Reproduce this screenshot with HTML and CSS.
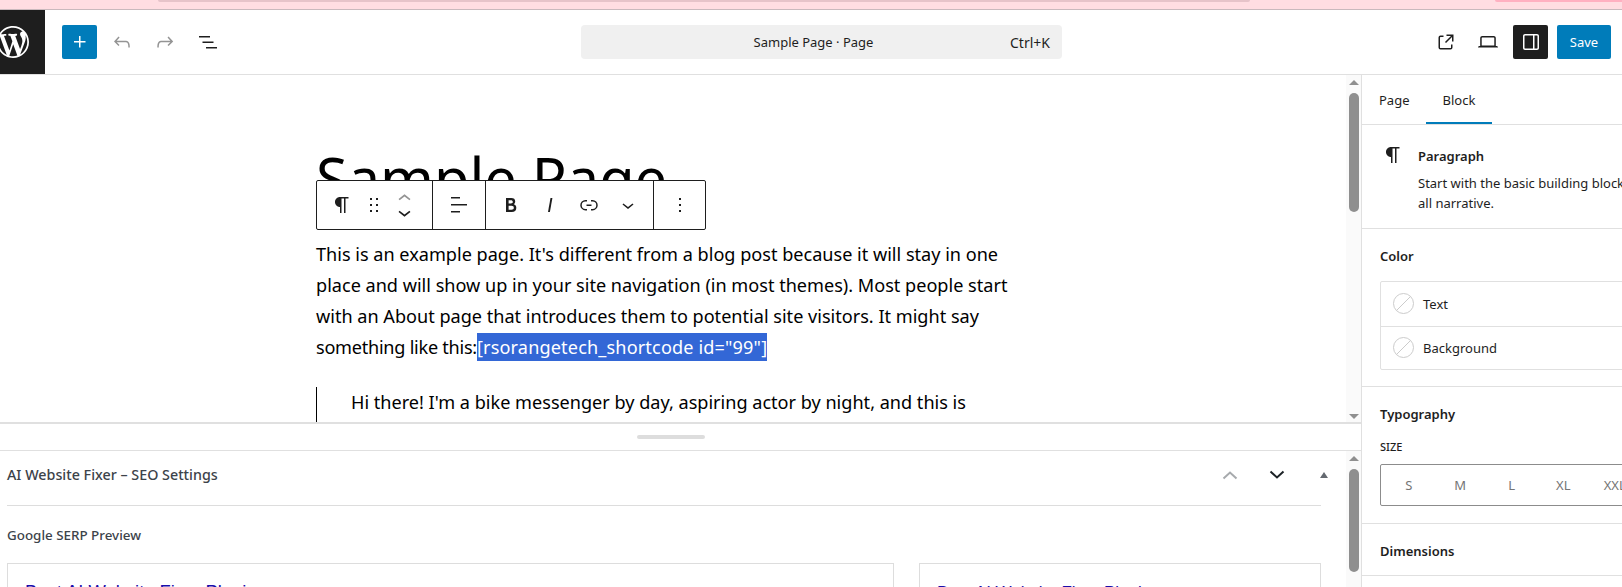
FILE: index.html
```html
<!DOCTYPE html>
<html lang="en">
<head>
  <meta charset="UTF-8">
  <title>Edit Page</title>
  <link rel="stylesheet" href="styles.css">
</head>
<body>
<div class="top-strip"><div class="top-strip-bar"></div><div class="top-strip-right"></div></div>

<header class="topbar">
  <div class="logo-box">
    <svg class="logo" viewBox="0 0 20 20"><path fill="#fff" d="M20 10c0-5.51-4.49-10-10-10C4.48 0 0 4.49 0 10c0 5.52 4.48 10 10 10 5.51 0 10-4.48 10-10zM7.78 15.37L4.37 6.22c.55-.02 1.17-.08 1.17-.08.5-.06.44-1.13-.06-1.11 0 0-1.45.11-2.37.11-.18 0-.37 0-.58-.01C4.12 2.69 6.87 1.11 10 1.11c2.33 0 4.45.87 6.05 2.34-.68-.11-1.65.39-1.65 1.58 0 .74.45 1.36.9 2.1.35.61.55 1.36.55 2.46 0 1.49-1.4 5-1.4 5l-3.03-8.37c.54-.02.82-.17.82-.17.5-.05.44-1.25-.06-1.22 0 0-1.44.12-2.38.12-.87 0-2.33-.12-2.33-.12-.5-.03-.56 1.2-.06 1.22l.92.08 1.26 3.41zM17.41 10c.24-.64.74-1.87.43-4.25.7 1.29 1.05 2.71 1.05 4.25 0 3.29-1.73 6.24-4.4 7.78.97-2.59 1.94-5.2 2.92-7.78zM6.1 18.09C3.12 16.65 1.11 13.53 1.11 10c0-1.3.23-2.48.72-3.59C3.25 10.3 4.67 14.2 6.1 18.09zm4.03-6.63l2.58 6.98c-.86.29-1.76.45-2.71.45-.79 0-1.57-.11-2.29-.33.81-2.38 1.62-4.74 2.42-7.1z"/></svg>
  </div>
  <div class="tools-left">
    <button class="icon-btn primary"><svg viewBox="0 0 24 24" width="24" height="24"><path fill="#fff" d="M11 12.5V17.5H12.5V12.5H17.5V11H12.5V6H11V11H6V12.5H11Z"/></svg></button>
    <button class="icon-btn muted"><svg viewBox="0 0 24 24" width="24" height="24"><path d="M18.3 11.7c-.6-.6-1.4-.9-2.3-.9H6.7l2.9-3.3-1.1-1-4.5 5L8.500 16l1-1-2.700-2.700H16c.5 0 .9.2 1.300.5 1 1 1 3.400 1 4.500v.3h1.500v-.2c0-1.500 0-4.300-1.500-5.700z"/></svg></button>
    <button class="icon-btn muted"><svg viewBox="0 0 24 24" width="24" height="24"><path d="M15.6 6.5l-1.1 1 2.900 3.300H8c-.9 0-1.700.3-2.300.9-1.400 1.500-1.400 4.200-1.400 5.600v.2h1.500v-.3c0-1.100 0-3.500 1-4.500.3-.3.7-.5 1.300-.5h9.200L14.500 15l1.100 1.100 4.600-4.600-4.600-5z"/></svg></button>
    <button class="icon-btn"><svg viewBox="0 0 24 24" width="24" height="24"><path d="M3 6h11v1.5H3V6Zm3.5 5.5h11V13h-11v-1.5ZM21 17H10v1.5h11V17Z"/></svg></button>
  </div>
  <div class="command-bar">
    <span class="command-title">Sample Page · Page</span>
    <span class="command-key">Ctrl+K</span>
  </div>
  <div class="tools-right">
    <button class="icon-btn btn-external"><svg viewBox="0 0 24 24" width="24" height="24"><path d="M19.5 4.500h-7V6h4.440l-5.970 5.970 1.060 1.060L18 7.060v4.440h1.500v-7Zm-13 1a2 2 0 0 0-2 2v10a2 2 0 0 0 2 2h10a2 2 0 0 0 2-2v-3H17v3a.5.5 0 0 1-.5.5h-10a.5.5 0 0 1-.5-.5v-10a.5.5 0 0 1 .5-.5h3V5.500h-3Z"/></svg></button>
    <button class="icon-btn btn-device"><svg viewBox="0 0 24 24" width="24" height="24"><path d="M20.5 16h-.7V8c0-1.100-.9-2-2-2H6.200c-1.100 0-2 .9-2 2v8h-.7c-.8 0-1.500.7-1.500 1.500h20c0-.8-.7-1.500-1.500-1.500zM5.700 8c0-.3.2-.5.5-.5h11.600c.3 0 .5.2.5.5v7.600H5.700V8z"/></svg></button>
    <button class="icon-btn dark"><svg viewBox="0 0 24 24" width="24" height="24"><path fill="#fff" d="M18 4H6c-1.100 0-2 .9-2 2v12c0 1.100.9 2 2 2h12c1.100 0 2-.9 2-2V6c0-1.100-.9-2-2-2zm-4 14.500H6c-.3 0-.5-.2-.5-.5V6c0-.3.2-.5.5-.5h8v13zm4.500-.5c0 .3-.2.5-.5.5h-2.500v-13H18c.3 0 .5.2.5.5v12z"/></svg></button>
    <button class="save-btn">Save</button>
  </div>
</header>

<div class="workspace">
  <div class="editor-column">
    <div class="canvas-pane">
      <div class="canvas">
        <div class="canvas-inner">
          <h1 class="page-title">Sample Page</h1>
          <p class="para">This is an example page. It's different from a blog post because it will stay in one place and will show up in your site navigation (in most themes). Most people start with an About page that introduces them to potential site visitors. It might say <span class="tight">something like this:</span><span class="selected">[rsorangetech_shortcode id="99"]</span></p>
          <blockquote class="quote">Hi there! I'm a bike messenger by day, aspiring actor by night, and this is</blockquote>

          <div class="block-toolbar">
            <div class="tb-group tb-first">
              <svg class="tb-para" viewBox="0 0 24 24" width="24" height="24"><path d="m9.99609 14v-.2251l.00391.0001v6.225h1.5v-14.5h2.5v14.5h1.5v-14.5h3v-1.5h-8.50391c-2.76142 0-5 2.23858-5 5 0 2.7614 2.23858 5 5 5z"/></svg>
              <svg class="tb-drag" viewBox="0 0 24 24" width="24" height="24"><path d="M8 7h2V5H8v2zm0 6h2v-2H8v2zm0 6h2v-2H8v2zm6-14v2h2V5h-2zm0 8h2v-2h-2v2zm0 6h2v-2h-2v2z"/></svg>
              <div class="tb-movers">
                <svg class="muted-icon" viewBox="6 7 12 8" width="13" height="9"><path d="M6.5 12.4L12 8l5.500 4.400-.9 1.200L12 10l-4.500 3.600-1-1.200z"/></svg>
                <svg viewBox="6 9 12 8" width="13" height="9"><path d="M17.5 11.6L12 16l-5.500-4.400.9-1.200L12 14l4.500-3.600 1 1.200z"/></svg>
              </div>
            </div>
            <div class="tb-group tb-align">
              <svg viewBox="0 0 24 24" width="24" height="24"><path d="M13 5.5H4V4h9v1.5Zm7 7H4V11h16v1.5Zm-7 7H4V18h9v1.5Z"/></svg>
            </div>
            <div class="tb-group tb-format">
              <svg viewBox="0 0 24 24" width="24" height="24"><path d="M14.7 11.3c1-.6 1.500-1.600 1.500-3 0-2.300-1.300-3.400-4-3.400H7v14h5.800c1.400 0 2.500-.3 3.300-1 .8-.7 1.200-1.700 1.200-2.900.1-1.900-.8-3.100-2.600-3.700zm-5.100-4h2.300c.6 0 1.100.1 1.400.4.3.3.5.7.5 1.200s-.2 1-.5 1.200c-.3.3-.8.4-1.400.4H9.600V7.300zm4.600 9c-.4.3-1 .4-1.700.4H9.600v-3.900h2.900c.7 0 1.300.2 1.700.5.4.3.6.8.6 1.500s-.2 1.200-.6 1.500z"/></svg>
              <svg viewBox="0 0 24 24" width="24" height="24"><path d="M12.5 5L10 19h1.900l2.500-14z"/></svg>
              <svg viewBox="0 0 24 24" width="24" height="24"><path d="M10 17.389H8.444A5.194 5.194 0 1 1 8.444 7H10v1.5H8.444a3.694 3.694 0 0 0 0 7.389H10v1.5ZM14 7h1.556a5.194 5.194 0 0 1 0 10.39H14v-1.5h1.556a3.694 3.694 0 0 0 0-7.39H14V7Zm-4.5 6h5v-1.5h-5V13Z"/></svg>
              <svg viewBox="0 0 24 24" width="24" height="24"><path d="M17.5 11.6L12 16l-5.500-4.400.9-1.200L12 14l4.500-3.600 1 1.200z"/></svg>
            </div>
            <div class="tb-group tb-more">
              <svg viewBox="0 0 24 24" width="24" height="24"><path d="M13 19h-2v-2h2v2zm0-6h-2v-2h2v2zm0-6h-2V5h2v2z"/></svg>
            </div>
          </div>
        </div>
      </div>
      <div class="scrollbar">
        <span class="arrow-up"></span>
        <span class="thumb thumb-top"></span>
        <span class="spacer"></span>
        <span class="arrow-down"></span>
      </div>
    </div>

    <div class="meta-pane">
      <div class="resize-area"><span class="resize-handle"></span></div>
      <div class="meta-body">
        <div class="meta-scroll">
          <div class="meta-head">
            <h2 class="meta-title">AI Website Fixer – SEO Settings</h2>
            <div class="meta-controls">
              <svg class="chev-light" viewBox="0 0 16 10" width="16" height="10"><path d="M1.500 8.500 8 2.500l6.500 6"/></svg>
              <svg class="chev-dark" viewBox="0 0 16 10" width="16" height="10"><path d="M1.500 1.500 8 7.500l6.500-6"/></svg>
              <span class="meta-tri"></span>
            </div>
          </div>
          <h3 class="serp-label">Google SERP Preview</h3>
          <div class="serp-row">
            <div class="serp-card serp-main"><a class="serp-link">Best AI Website Fixer Plugin</a></div>
            <div class="serp-card serp-side"><a class="serp-link small">Best AI Website Fixer Plugin</a></div>
          </div>
        </div>
        <div class="scrollbar">
          <span class="arrow-up"></span>
          <span class="thumb thumb-bottom"></span>
        </div>
      </div>
    </div>
  </div>

  <aside class="sidebar">
    <div class="tabs">
      <span class="tab">Page</span>
      <span class="tab active">Block</span>
    </div>
    <section class="side-section block-card">
      <svg viewBox="0 0 24 24" width="24" height="24"><path d="m9.99609 14v-.2251l.00391.0001v6.225h1.5v-14.5h2.5v14.5h1.5v-14.5h3v-1.5h-8.50391c-2.76142 0-5 2.23858-5 5 0 2.7614 2.23858 5 5 5z"/></svg>
      <div class="block-info">
        <h3>Paragraph</h3>
        <p>Start with the basic building block of all narrative.</p>
      </div>
    </section>
    <section class="side-section color-section">
      <h3 class="side-heading">Color</h3>
      <div class="color-box">
        <div class="color-row"><span class="swatch"></span>Text</div>
        <div class="color-row"><span class="swatch"></span>Background</div>
      </div>
    </section>
    <section class="side-section type-section">
      <h3 class="side-heading">Typography</h3>
      <div class="size-label">SIZE</div>
      <div class="size-box">
        <span>S</span><span>M</span><span>L</span><span>XL</span><span>XXL</span>
      </div>
    </section>
    <section class="side-section dim-section">
      <h3 class="side-heading">Dimensions</h3>
    </section>
  </aside>
</div>
</body>
</html>
```

FILE: styles.css
```css
* {
  box-sizing: border-box;
}

html, body {
  margin: 0;
  height: 100%;
  overflow: hidden;
}

body {
  font-family: "Noto Sans", "Open Sans", sans-serif;
  color: #1e1e1e;
  background-color: #fff;
  display: flex;
  flex-direction: column;
}

svg {
  display: block;
  fill: currentColor;
}

h1, h2, h3, p, blockquote {
  margin: 0;
}

/* browser strip above the editor */
.top-strip {
  height: 10px;
  flex: none;
  background-color: #ffdde2;
  border-bottom: 1px solid #c9b9bd;
  display: flex;
  align-items: flex-start;
}

.top-strip-bar {
  margin-left: 158px;
  width: 1092px;
  height: 2px;
  background-color: #e6c3c9;
  border-radius: 0 0 6px 6px;
}

.top-strip-right {
  margin-left: 245px;
  flex: 1;
  height: 2px;
  background-color: #ffb0c1;
  border-radius: 0 0 0 6px;
}

/* header */
.topbar {
  height: 65px;
  flex: none;
  display: flex;
  align-items: center;
  border-bottom: 1px solid #e0e0e0;
  position: relative;
}

.logo-box {
  width: 45px;
  height: 64px;
  background-color: #1e1e1e;
  display: flex;
  align-items: center;
  overflow: hidden;
}

.logo {
  width: 32px;
  height: 32px;
  margin-left: -3px;
  flex: none;
}

.tools-left {
  display: flex;
  align-items: center;
  margin-left: 17px;
  width: 519px;
}

.icon-btn {
  width: 35px;
  height: 34px;
  padding: 0;
  border: none;
  border-radius: 2px;
  background: none;
  color: #1e1e1e;
  display: flex;
  align-items: center;
  justify-content: center;
  margin-right: 8px;
}

.icon-btn.primary {
  background-color: #007cba;
  margin-right: 7px;
}

.icon-btn.muted {
  color: #949494;
}

.icon-btn.dark {
  background-color: #1e1e1e;
  margin-right: 9px;
}

.command-bar {
  width: 481px;
  height: 34px;
  background-color: #f0f0f0;
  border-radius: 4px;
  display: flex;
  align-items: center;
  font-size: 13px;
  padding-right: 12px;
}

.command-title {
  flex: 1;
  text-align: center;
  padding-left: 36px;
}

.command-key {
  font-size: 14px;
}

.tools-right {
  margin-left: auto;
  padding-right: 11px;
  display: flex;
  align-items: center;
}

.tools-right .btn-external {
  margin-right: 7px;
}

.tools-right .btn-device {
  margin-right: 8px;
}

.tools-right .icon-btn.dark {
  margin-right: 9px;
}

.save-btn {
  width: 54px;
  height: 34px;
  border: none;
  border-radius: 2px;
  background-color: #007cba;
  color: #fff;
  font-family: inherit;
  font-size: 13px;
  padding: 0;
}

/* main area */
.workspace {
  flex: 1;
  display: flex;
  min-height: 0;
}

.editor-column {
  width: 1362px;
  flex: none;
  display: flex;
  flex-direction: column;
  border-right: 1px solid #e0e0e0;
}

.canvas-pane {
  height: 349px;
  flex: none;
  display: flex;
  border-bottom: 2px solid #e0e0e0;
}

.canvas {
  flex: 1;
  overflow: hidden;
}

.canvas-inner {
  width: 700px;
  margin-left: 316px;
  position: relative;
  padding-top: 73px;
}

.page-title {
  font-size: 57.7px;
  font-weight: 400;
  line-height: 60px;
  color: #000;
  margin-bottom: 31px;
}

.para {
  font-size: 18.1px;
  line-height: 31px;
  color: #000;
  margin-bottom: 24px;
}

.tight {
  letter-spacing: -0.25px;
}

.selected {
  background-color: #3367d6;
  color: #fff;
  padding: 2px 0;
  letter-spacing: 0.15px;
}

.quote {
  font-size: 18.1px;
  line-height: 31px;
  color: #000;
  padding-left: 34px;
  border-left: 1px solid #000;
  height: 60px;
}

.block-toolbar {
  position: absolute;
  top: 105px;
  left: 0;
  width: 390px;
  height: 50px;
  background-color: #fff;
  border: 1px solid #1e1e1e;
  border-radius: 2px;
  display: flex;
}

.tb-group {
  display: flex;
  align-items: center;
  border-right: 1px solid #1e1e1e;
}

.tb-group:last-child {
  border-right: none;
}

.tb-first {
  width: 116px;
  padding-left: 13px;
}

.tb-drag {
  margin-left: 8px;
}

.tb-movers {
  margin-left: 12px;
  display: flex;
  flex-direction: column;
  gap: 7px;
}

.muted-icon {
  color: #949494;
}

.tb-align {
  width: 53px;
  justify-content: center;
}

.tb-format {
  width: 168px;
  padding-left: 13px;
  gap: 15px;
}

.tb-more {
  flex: 1;
  justify-content: center;
}

.scrollbar {
  width: 15px;
  flex: none;
  background-color: #fafafa;
  display: flex;
  flex-direction: column;
  align-items: center;
  padding-top: 5px;
  padding-bottom: 3px;
}

.arrow-up {
  width: 0;
  height: 0;
  border-left: 5px solid transparent;
  border-right: 5px solid transparent;
  border-bottom: 5px solid #8f8f8f;
}

.arrow-down {
  width: 0;
  height: 0;
  border-left: 5px solid transparent;
  border-right: 5px solid transparent;
  border-top: 5px solid #8f8f8f;
}

.thumb {
  width: 10px;
  background-color: #8f8f8f;
  border-radius: 5px;
  margin-top: 8px;
}

.thumb-top {
  height: 119px;
}

.thumb-bottom {
  height: 103px;
}

.spacer {
  flex: 1;
}

/* meta boxes */
.meta-pane {
  flex: 1;
  min-height: 0;
  display: flex;
  flex-direction: column;
}

.resize-area {
  height: 27px;
  flex: none;
  border-bottom: 1px solid #e0e0e0;
  display: flex;
  justify-content: center;
  padding-top: 11px;
  padding-right: 19px;
}

.resize-handle {
  width: 68px;
  height: 4px;
  border-radius: 2px;
  background-color: #ddd;
}

.meta-body {
  flex: 1;
  min-height: 0;
  display: flex;
}

.meta-scroll {
  flex: 1;
  overflow: hidden;
  padding-left: 7px;
  padding-right: 25px;
}

.meta-head {
  height: 55px;
  border-bottom: 1px solid #ddd;
  display: flex;
  align-items: center;
  justify-content: space-between;
  padding-bottom: 7px;
}

.meta-title {
  font-size: 14.3px;
  font-weight: 500;
  color: #3c434a;
}

.meta-controls {
  display: flex;
  align-items: center;
  margin-right: -7px;
}

.chev-light, .chev-dark {
  fill: none;
  stroke-width: 2;
}

.chev-light {
  stroke: #a7aaad;
  margin-right: 31px;
  margin-left: -1px;
}

.chev-dark {
  stroke: #1d2327;
  margin-right: 35px;
}

.meta-tri {
  width: 0;
  height: 0;
  border-left: 4px solid transparent;
  border-right: 4px solid transparent;
  border-bottom: 6px solid #646970;
}

.serp-label {
  font-size: 13.4px;
  font-weight: 500;
  color: #3c434a;
  margin-top: 19px;
  line-height: 20px;
}

.serp-row {
  display: flex;
  gap: 25px;
  margin-top: 18px;
}

.serp-card {
  border: 1px solid #ddd;
  padding: 17px 17px;
  height: 100px;
}

.serp-main {
  width: 887px;
}

.serp-side {
  flex: 1;
}

.serp-link {
  font-family: "Liberation Sans", Arial, sans-serif;
  font-size: 18.4px;
  line-height: 22px;
  color: #1a0dab;
}

.serp-link.small {
  font-size: 17px;
}

/* settings sidebar */
.sidebar {
  flex: 1;
  min-width: 0;
  overflow: hidden;
  font-size: 13px;
}

.tabs {
  height: 50px;
  display: flex;
  border-bottom: 1px solid #e0e0e0;
  padding-left: 1px;
}

.tab {
  height: 49px;
  padding: 0 16px;
  display: flex;
  align-items: center;
}

.tab.active {
  box-shadow: inset 0 -2px 0 #007cba;
  padding: 0 17px;
}

.side-section {
  width: 300px;
  padding-left: 18px;
  border-bottom: 1px solid #e0e0e0;
}

.block-card {
  height: 104px;
  display: flex;
  padding-top: 18px;
  gap: 13px;
  padding-left: 19px;
}

.block-card svg {
  flex: none;
}

.block-info h3 {
  font-size: 13px;
  font-weight: 600;
  line-height: 24px;
  margin-top: 1px;
}

.block-info p {
  line-height: 20px;
  margin-top: 5px;
  width: 238px;
}

.side-heading {
  font-size: 13px;
  font-weight: 600;
  line-height: 20px;
}

.color-section {
  height: 158px;
  padding-top: 17px;
}

.color-box {
  margin-top: 15px;
  height: 89px;
  border: 1px solid #e0e0e0;
  border-radius: 2px;
  display: flex;
  flex-direction: column;
}

.color-row {
  height: 44px;
  display: flex;
  align-items: center;
  padding-left: 12px;
  gap: 9px;
}

.color-row + .color-row {
  border-top: 1px solid #e0e0e0;
}

.swatch {
  width: 21px;
  height: 21px;
  border-radius: 50%;
  border: 1px solid #ccc;
  background: linear-gradient(135deg, transparent 48%, #ccc 48%, #ccc 52%, transparent 52%);
}

.type-section {
  height: 137px;
  padding-top: 17px;
}

.size-label {
  font-size: 11px;
  font-weight: 500;
  line-height: 16px;
  margin-top: 15px;
}

.size-box {
  margin-top: 9px;
  height: 42px;
  border: 1px solid #8c8c8c;
  border-radius: 2px;
  display: flex;
  align-items: center;
  color: #757575;
  padding-left: 2px;
}

.size-box span {
  width: 51.5px;
  text-align: center;
}

.dim-section {
  height: 52px;
  padding-top: 17px;
}
```
